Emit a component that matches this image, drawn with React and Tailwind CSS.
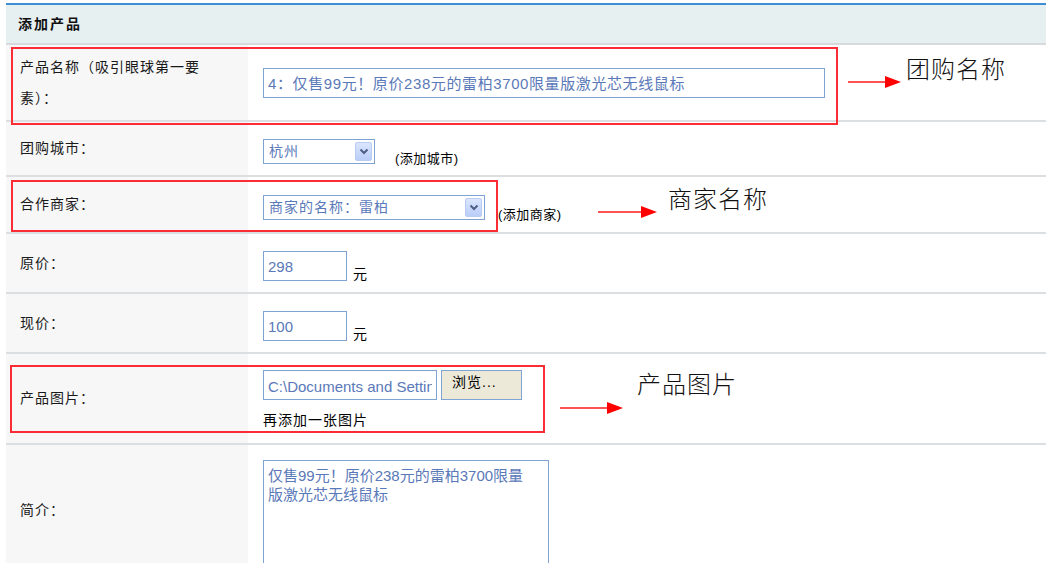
import React from 'react';

const FONT = { fontFamily: '"Liberation Sans", "Noto Sans CJK SC", sans-serif' };

const Arrow = ({ width }) => (
  <svg width={width} height="14" viewBox={`0 0 ${width} 14`} className="block">
    <line x1="0" y1="7" x2={width - 14} y2="7" stroke="#ff1a1a" strokeWidth="1.6" />
    <polygon points={`${width - 16},1 ${width},7 ${width - 16},13`} fill="#ff0000" />
  </svg>
);

const Chevron = () => (
  <svg width="10" height="7" viewBox="0 0 10 7">
    <path d="M1.5 1.5 L5 5 L8.5 1.5" fill="none" stroke="#4d5f86" strokeWidth="2" />
  </svg>
);

const FakeSelect = ({ value, width }) => (
  <div className="flex items-center justify-between border border-[#7fa3d3] bg-white h-[25px] pl-[5px] pr-[2px]" style={{ width }}>
    <span className="text-[14px] tracking-[1px] text-[#5a79b8]">{value}</span>
    <span className="flex items-center justify-center w-[17px] h-[19px] rounded-[2px] border border-[#b8cbf2] bg-gradient-to-b from-[#dbe6fd] to-[#b9cdf7]">
      <Chevron />
    </span>
  </div>
);

const TextBox = ({ value, className }) => (
  <input
    readOnly
    value={value}
    className={`border border-[#7fa3d3] bg-white h-[30px] px-[4px] text-[15px] text-[#5a79b8] outline-none ${className}`}
    style={FONT}
  />
);

const Row = ({ label, height, children, align = 'items-center', last }) => (
  <div className={`grid grid-cols-[242px_1fr] ${last ? '' : 'border-b-2 border-[#dcdfe2]'}`} style={{ height }}>
    <div className="bg-[#f7f7f7] flex items-center pl-[14px] text-[14px] tracking-[1px] text-[#1a1a1a]">{label}</div>
    <div className={`bg-white ml-[2px] flex pl-[13px] ${align}`}>{children}</div>
  </div>
);

export default function App() {
  return (
    <div className="w-[1048px] h-[563px] overflow-hidden bg-white pt-[3px] pl-[6px] pr-[2px]" style={FONT}>
      <div className="relative border-t-2 border-[#3c8dd4]">
        <div className="h-[40px] bg-[#e6f0f1] border-b-2 border-[#d6dadc] flex items-center pl-[12px]">
          <span className="text-[14px] font-bold tracking-[2px] text-[#111]">添加产品</span>
        </div>

        <Row height={77} label={<span className="w-[190px] leading-[31px]">产品名称（吸引眼球第一要素）：</span>}>
          <TextBox value="4：仅售99元！原价238元的雷柏3700限量版激光芯无线鼠标" className="w-[562px] tracking-[0.6px]" />
        </Row>

        <Row height={55} label="团购城市：">
          <div className="flex items-end gap-[20px] pt-[6px]">
            <FakeSelect value="杭州" width={112} />
            <span className="text-[13px] tracking-[0.5px] text-black -mb-[4px]">(添加城市)</span>
          </div>
        </Row>

        <Row height={57} label="合作商家：">
          <div className="flex items-end gap-[13px] pt-[6px]">
            <FakeSelect value="商家的名称：雷柏" width={222} />
            <span className="text-[13px] tracking-[0.5px] text-black -mb-[4px]">(添加商家)</span>
          </div>
        </Row>

        <Row height={60} label="原价：">
          <div className="flex items-end gap-[6px] pt-[6px]">
            <TextBox value="298" className="w-[84px]" />
            <span className="text-[14px] text-black -mb-[4px]">元</span>
          </div>
        </Row>

        <Row height={60} label="现价：">
          <div className="flex items-end gap-[6px] pt-[6px]">
            <TextBox value="100" className="w-[84px]" />
            <span className="text-[14px] text-black -mb-[4px]">元</span>
          </div>
        </Row>

        <Row height={91} label="产品图片：">
          <div className="flex flex-col gap-[10px] pt-[4px]">
            <div className="flex gap-[4px]">
              <TextBox value="C:\Documents and Settings\Administrator\桌面\3700.jpg" className="w-[174px]" />
              <button className="w-[81px] h-[30px] border border-[#7fa3d3] bg-[#ece9d8] text-[14px] tracking-[1px] text-black text-left pl-[10px] pb-[6px]">
                浏览...
              </button>
            </div>
            <span className="text-[14px] tracking-[1px] text-black">再添加一张图片</span>
          </div>
        </Row>

        <Row height={130} label="简介：" align="items-start" last>
          <div className="mt-[15px] w-[286px] h-[104px] border border-[#7fa3d3] bg-white pl-[4px] pr-[14px] pt-[5px] text-[15px] leading-[19px] text-[#5a79b8]">
            仅售99元！原价238元的雷柏3700限量版激光芯无线鼠标
          </div>
        </Row>

        {/* red callout frames and notes */}
        <div className="absolute left-[5px] top-[42px] w-[827px] h-[78px] border-2 border-red-500" />
        <div className="absolute left-[5px] top-[175px] w-[487px] h-[52px] border-2 border-red-500" />
        <div className="absolute left-[4px] top-[360px] w-[535px] h-[68px] border-2 border-red-500" />

        <div className="absolute left-[842px] top-[70px]"><Arrow width={53} /></div>
        <div className="absolute left-[900px] top-[47px] text-[24px] tracking-[1px] text-[#111] font-light">团购名称</div>

        <div className="absolute left-[592px] top-[200px]"><Arrow width={59} /></div>
        <div className="absolute left-[662px] top-[177px] text-[24px] tracking-[1px] text-[#111] font-light">商家名称</div>

        <div className="absolute left-[554px] top-[396px]"><Arrow width={63} /></div>
        <div className="absolute left-[631px] top-[362px] text-[24px] tracking-[1px] text-[#111] font-light">产品图片</div>
      </div>
    </div>
  );
}
